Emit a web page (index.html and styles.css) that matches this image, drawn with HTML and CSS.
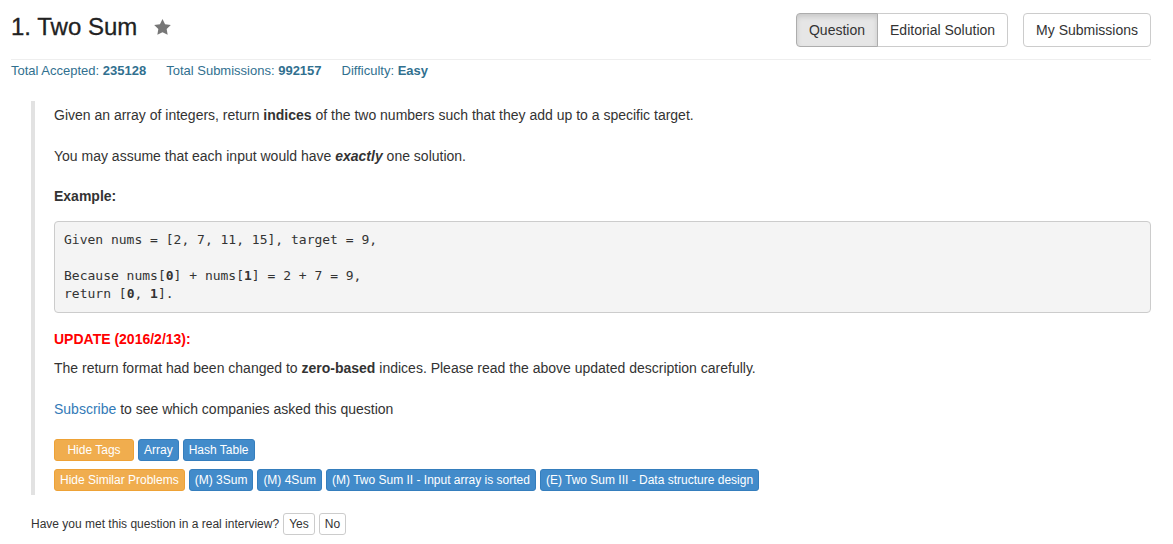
FILE: index.html
```html
<!DOCTYPE html>
<html>
<head>
<meta charset="utf-8">
<title>1. Two Sum</title>
<link rel="stylesheet" href="styles.css">
</head>
<body>
<div class="page">
  <div class="header">
    <h1 class="title">1. Two Sum<svg class="star" viewBox="2 2 20 19.2" width="17" height="16"><polygon points="12,2 15.09,8.26 22,9.27 17,14.14 18.18,21.02 12,17.77 5.82,21.02 7,14.14 2,9.27 8.91,8.26" fill="#777"/></svg></h1>
    <div class="actions">
      <div class="btn-group">
        <a class="btn btn-active">Question</a><a class="btn">Editorial Solution</a>
      </div>
      <a class="btn">My Submissions</a>
    </div>
  </div>
  <div class="stats">
    <span class="stat">Total Accepted: <b>235128</b></span>
    <span class="stat">Total Submissions: <b>992157</b></span>
    <span class="stat">Difficulty: <b>Easy</b></span>
  </div>
  <blockquote class="question">
    <p class="p1">Given an array of integers, return <b>indices</b> of the two numbers such that they add up to a specific target.</p>
    <p class="p2">You may assume that each input would have <b><i>exactly</i></b> one solution.</p>
    <p class="p3"><b>Example:</b></p>
<pre class="code">Given nums = [2, 7, 11, 15], target = 9,

Because nums[<b>0</b>] + nums[<b>1</b>] = 2 + 7 = 9,
return [<b>0</b>, <b>1</b>].</pre>
    <p class="update">UPDATE (2016/2/13):</p>
    <p class="p4">The return format had been changed to <b>zero-based</b> indices. Please read the above updated description carefully.</p>
    <p class="p5"><a class="link">Subscribe</a> to see which companies asked this question</p>
    <div class="tags">
      <div class="tag-row">
        <span class="tag tag-warn tag-wide">Hide Tags</span>
        <span class="tag tag-blue">Array</span>
        <span class="tag tag-blue">Hash Table</span>
      </div>
      <div class="tag-row">
        <span class="tag tag-warn">Hide Similar Problems</span>
        <span class="tag tag-blue">(M) 3Sum</span>
        <span class="tag tag-blue">(M) 4Sum</span>
        <span class="tag tag-blue">(M) Two Sum II - Input array is sorted</span>
        <span class="tag tag-blue">(E) Two Sum III - Data structure design</span>
      </div>
    </div>
  </blockquote>
  <div class="interview">
    <span class="interview-text">Have you met this question in a real interview?</span>
    <a class="btn-xs">Yes</a>
    <a class="btn-xs">No</a>
  </div>
</div>
</body>
</html>
```
FILE: styles.css
```css
* { box-sizing: border-box; }
html, body { margin: 0; padding: 0; background: #fff; }
body {
  font-family: "Liberation Sans", Helvetica, Arial, sans-serif;
  font-size: 14px;
  line-height: 20px;
  color: #333;
}
.page { padding: 0 22px 0 11px; }

.header {
  display: flex;
  justify-content: space-between;
  align-items: flex-start;
  padding-top: 13px;
  padding-bottom: 12px;
  border-bottom: 1px solid #eee;
}
.title {
  margin: 0;
  font-size: 24px;
  line-height: 28px;
  font-weight: normal;
  color: #222;
  display: flex;
  align-items: center;
  -webkit-text-stroke: 0.3px #222;
}
.star { margin-left: 17px; }

.actions { display: flex; gap: 15px; }
.btn-group { display: flex; }
.btn {
  display: inline-block;
  height: 34px;
  padding: 6px 12px;
  font-size: 14px;
  line-height: 20px;
  color: #333;
  background: #fff;
  border: 1px solid #ccc;
  border-radius: 4px;
  cursor: pointer;
}
.btn-group .btn:first-child { border-top-right-radius: 0; border-bottom-right-radius: 0; }
.btn-group .btn:last-child { border-top-left-radius: 0; border-bottom-left-radius: 0; margin-left: -1px; }
.btn-active {
  background: #e6e6e6;
  border-color: #adadad;
  box-shadow: inset 0 3px 5px rgba(0,0,0,.125);
  position: relative;
}

.stats {
  display: flex;
  gap: 20px;
  padding-top: 2px;
  font-size: 13px;
  line-height: 17px;
  color: #31708f;
}
.stats b { font-weight: bold; }

.question {
  margin: 22px 0 0 20px;
  padding: 4px 0 4px 19px;
  border-left: 4px solid #e2e2e2;
}
.question p { margin: 0; }
.p1 { margin-bottom: 21px !important; }
.p2 { margin-bottom: 20px !important; }
.p3 { margin-bottom: 15px !important; }
.code {
  margin: 0 0 16px 0;
  padding: 9px;
  font-family: "DejaVu Sans Mono", Menlo, monospace;
  font-size: 13px;
  line-height: 18px;
  color: #333;
  background: #f4f4f4;
  border: 1px solid #ccc;
  border-radius: 4px;
  white-space: pre;
}
.update { color: #f00; font-weight: bold; margin-bottom: 9px !important; }
.p4 { margin-bottom: 21px !important; }
.p5 { margin-bottom: 20px !important; }
.link { color: #337ab7; text-decoration: none; }

.tags { display: flex; flex-direction: column; gap: 8px; }
.tag-row { display: flex; gap: 4px; }
.tag {
  display: inline-block;
  height: 22px;
  padding: 1px 5px;
  font-size: 12px;
  line-height: 18px;
  color: #fff;
  border: 1px solid;
  border-radius: 3px;
  text-align: center;
  white-space: nowrap;
}
.tag-warn { background: #f0ad4e; border-color: #eea236; }
.tag-blue { background: #428bca; border-color: #357ebd; }
.tag-wide { width: 80px; }

.interview {
  display: flex;
  align-items: center;
  gap: 4px;
  margin: 18px 0 0 20px;
  font-size: 12px;
}
.btn-xs {
  display: inline-block;
  height: 22px;
  padding: 1px 5px;
  font-size: 12px;
  line-height: 18px;
  color: #333;
  background: #fff;
  border: 1px solid #ccc;
  border-radius: 3px;
}
```
